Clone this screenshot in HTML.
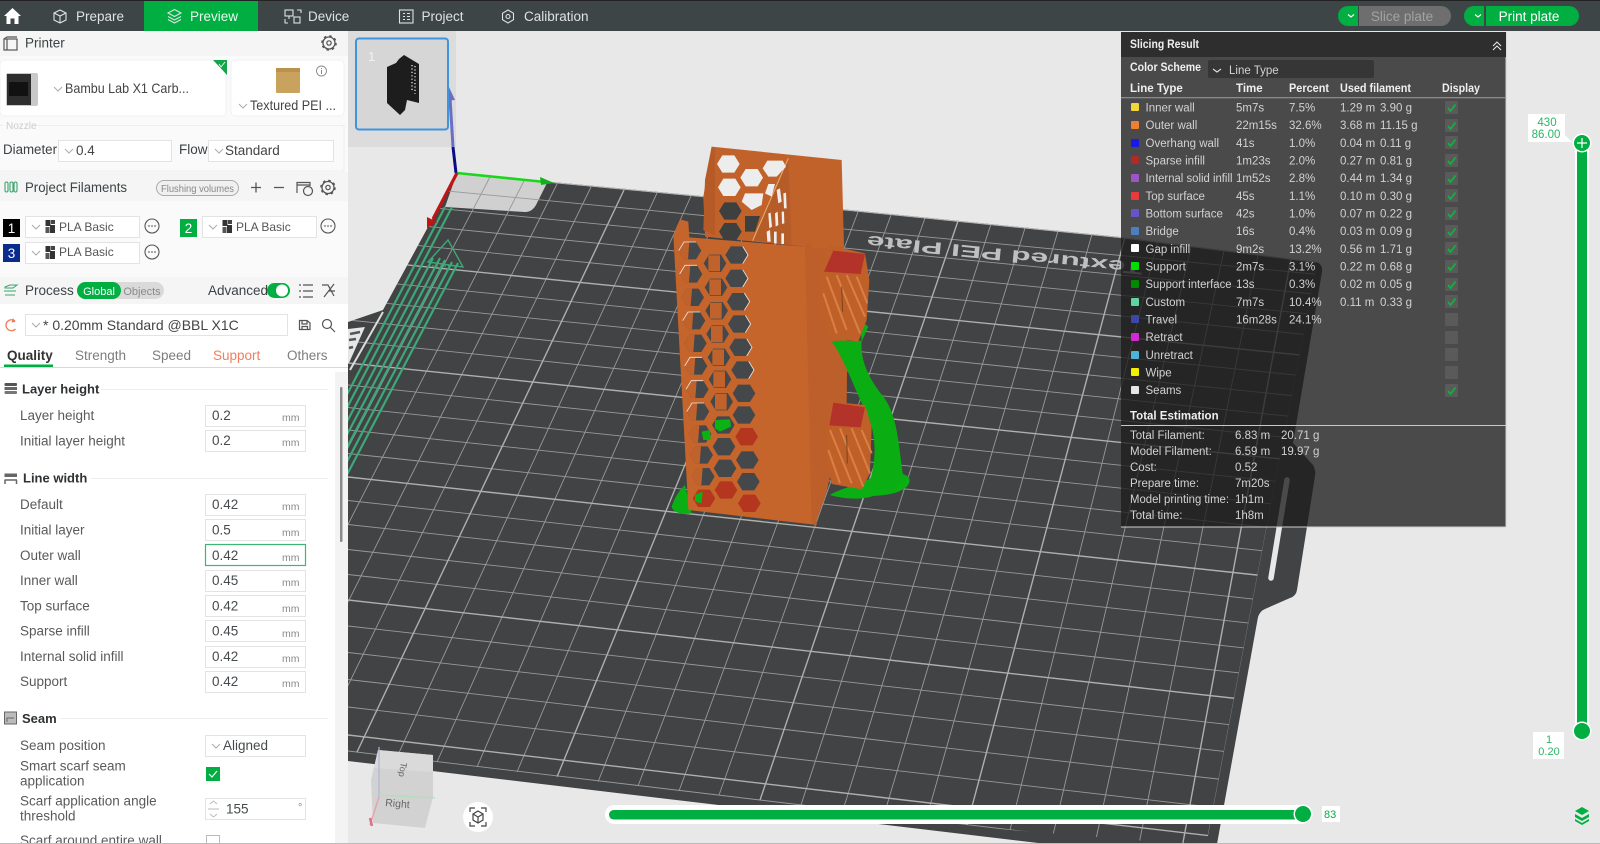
<!DOCTYPE html>
<html><head><meta charset="utf-8"><title>Bambu Studio Preview</title>
<style>
html,body{margin:0;padding:0;background:#e8e8e8;width:1600px;height:844px;overflow:hidden}
svg{display:block;font-family:"Liberation Sans",sans-serif}
.tb{font-size:13.5px;fill:#dfe2e2}
.l{font-size:13.5px;fill:#5a5a5a}
.d{font-size:13.5px;fill:#3c4245}
.v{font-size:13.5px;fill:#454a4c}
.u{font-size:10.5px;fill:#8a8a8a}
.b{font-size:13px;font-weight:bold;fill:#2e3234}
.p{font-size:11.5px;fill:#d2d2d2}
.ph{font-size:11.5px;font-weight:bold;fill:#efefef}
.ic{fill:none;stroke:#555;stroke-width:1.2}
.it{fill:none;stroke:#dfe2e2;stroke-width:1.1}
</style></head><body>
<svg width="1600" height="844" viewBox="0 0 1600 844" xmlns="http://www.w3.org/2000/svg">
<defs>
<clipPath id="pl"><path d="M457 173L552 182L850 210L1120 237L1316 262Q1323 264 1322 272L1293 443L1313 465Q1316 470 1315 476L1297 590Q1296 596 1290 598L1265 609Q1260 611 1258 617L1217 844H1047L348 761V322L383 310L428 227Z"/></clipPath>
<clipPath id="gr"><path d="M340 160L457 172L552 181L850 209L1120 236L1317 262L1206 846L962 826L762 801L357 753L340 751Z"/></clipPath>
<path id="h" d="M-34 0L-18 -26L18 -26L34 0L18 26L-18 26Z"/>
<path id="hl" d="M-34 0L-18 -26L-2 -26L-6 26L-18 26Z"/>
<path id="hc" d="M-20 -24H15V24H-20Z"/>
<path id="ew" d="M-34 0L-18 -26H18" fill="none" stroke="#e8e8e8" stroke-width="2.5"/>
<path id="er" d="M18 -26L34 0L18 26" fill="none" stroke="#e8e8e8" stroke-width="2.5"/>
<path id="cv" d="M-4 -2L0 2L4 -2" fill="none" stroke="#aaa" stroke-width="1"/>
<g id="gear"><circle r="6" fill="none" stroke="#555" stroke-width="1.3"/><circle r="7" fill="none" stroke="#555" stroke-width="1.6" stroke-dasharray="2.5 3"/><circle r="2.2" fill="none" stroke="#555" stroke-width="1.2"/></g>
<g id="mn"><circle r="7" fill="none" stroke="#555" stroke-width="1.1"/><path d="M-4 0h2M-1 0h2M2 0h2" stroke="#555" stroke-width="1.1"/></g>
<g id="fi"><rect x="0" y="0" width="5" height="6" fill="#333"/><rect x="5.5" y="0" width="4" height="4" fill="#444"/><rect x="0" y="7" width="4" height="6" fill="#555"/><rect x="4.5" y="5" width="5" height="8" fill="#333"/></g>
<g id="cb"><rect width="13" height="13" rx="1" fill="#5a5a5a"/></g>
<path id="ck" d="M3 7L5.5 10L10.5 3.5" fill="none" stroke="#12b03f" stroke-width="1.8"/>
</defs>

<!-- viewport -->
<rect width="1600" height="844" fill="#e8e8e8"/>
<rect x="348" y="31" width="108" height="116" fill="#dcdcdc"/>

<!-- plate -->
<path d="M457 173L552 182L850 210L1120 237L1316 262Q1323 264 1322 272L1293 443L1313 465Q1316 470 1315 476L1297 590Q1296 596 1290 598L1265 609Q1260 611 1258 617L1217 844H1047L348 761V322L383 310L428 227Z" fill="#414344"/>
<path d="M457 173L547 183L537 203Q533 212 525 212L445 207Z" fill="#d0d0d0"/>
<g clip-path="url(#pl)">
<g clip-path="url(#gr)">
<g fill="none" stroke="#98999a" stroke-width=".9">
<path d="M348 181.500L1340 276.500M348 199.500L1340 296.500M348 218.500L1340 317M348 238.500L1340 338M348 279L1340 379.500M348 299.500L1340 400.500M348 320L1340 421.500M348 341L1340 443M348 385L1340 488M348 407.500L1340 511M348 430L1340 535M348 453.500L1340 559M348 500.500L1340 608.500M348 524.500L1340 633M348 549.500L1340 658.500M348 574.500L1340 684M348 626L1340 737M348 652.500L1340 764.500M348 679.500L1340 793M348 707L1340 822M348 751L1340 869"/>
<path d="M490 177L199 732M524 181L239 737M557 184L278 742M591 187L318 747M657 193L397 757M691 196L437 762M724 199L477 767M758 202L517 772M824 209L598 782M858 212L638 786M891 215L679 791M925 218L719 795M991 224L801 805M1025 228L843 810M1058 231L884 815M1092 234L926 820M1158 240L1010 830M1192 243L1053 835M1225 246L1096 839M1259 250L1139 844"/>
<path d="M1317 264L1208 836"/>
</g>
<g fill="none" stroke="#aeafaf" stroke-width="1.4">
<path d="M348 259L1340 359M348 363L1340 465M348 477L1340 584M348 600L1340 710M348 735L1340 851"/>
<path d="M624 190L357 752M791 206L557 777M958 221L760 800M1125 237L967 825M1292 253L1182 848"/>
</g>
</g>
<path d="M552 182L850 210L1120 237L1316 262" fill="none" stroke="#b8b8b8" stroke-width="2"/>
<path d="M383 312L350 370" stroke="#dcdcdc" stroke-width="2"/>
<path d="M348 329L365 327L349 363H348Z" fill="#e6e6e6"/>
<path d="M350 334L360 332M349 340L356 339M349 348L353 347" stroke="#555" stroke-width="2.5"/>
<!-- purge lines -->
<g fill="none" stroke="#3da878" stroke-width="2.2">
<path d="M445 207L340 408M452 207L340 421"/>
<path d="M433 258L340 435M440 258L340 448M445 260L340 461M452 262L340 475M458 263L340 488"/>
<path d="M448 240L463 267L428 262Z" stroke-width="1.4"/>
<path d="M428 266H460" stroke-width="1" stroke-dasharray="2 2"/>
</g>
<text transform="translate(1143 263) rotate(185.7)" font-size="17" font-weight="bold" fill="#bfc0c0" textLength="277" lengthAdjust="spacingAndGlyphs">Textured PEI Plate</text>
</g>
<path d="M1287 480L1271 578" stroke="#e8e8e8" stroke-width="5.5" stroke-linecap="round"/>

<!-- axes -->
<path d="M456 173L453 147" stroke="#0b0b86" stroke-width="3"/>
<path d="M453 147L450 98" stroke="#6a6fc4" stroke-width="3"/>
<path d="M449 87L444 101L455 100Z" fill="#6a6fc4"/>
<path d="M457 173L545 182" stroke="#1bd71b" stroke-width="2.6"/>
<path d="M554 183L540 177L541 185Z" fill="#12b01b"/>
<path d="M457 173L433 219" stroke="#bf1515" stroke-width="3.2"/>
<path d="M427 228L427 217L437 222Z" fill="#c01515"/>

<!-- thumbnail -->
<rect x="356" y="38.500" width="92" height="91" rx="3" fill="#d6d6d6" stroke="#3d95e0" stroke-width="2"/>
<text x="368" y="61" font-size="13" fill="#f2f2f2">1</text>
<path d="M387 67L396 63L399 59L404 55L419 64L419 103L407 100L405 110L400 115L387 103Z" fill="#1d1d1d"/>
<path d="M412 65V92M415 66V94" stroke="#e8e8e8" stroke-width="1.3" stroke-dasharray="1.2 2.2"/>

<!-- model -->
<g transform="translate(620 130) scale(.33333)">
<!-- green base -->
<path d="M630 1095C660 1075 720 1065 760 1040C800 1030 850 1020 868 1045C875 1075 830 1095 760 1098C720 1112 660 1105 630 1095Z" fill="#0aaf14"/>
<path d="M155 1130C165 1100 175 1085 195 1065L215 1150C190 1155 160 1150 155 1130Z" fill="#0aaf14"/>
<!-- back wall -->
<path d="M275 50L665 90L672 350L600 390L555 350L255 320L250 200Z" fill="#c2622b"/>
<path d="M275 50L255 150L250 300L285 318L285 58Z" fill="#b65a27"/>
<path d="M505 85L400 330L515 345Z" fill="#b65c29"/>
<path d="M505 85L398 332" stroke="#e8b070" stroke-width="3"/>
<g fill="#ededed">
<use href="#h" x="325" y="102"/><use href="#h" x="395" y="143"/><use href="#h" x="328" y="172"/>
<path d="M428 115L442 92H488L498 110L470 140L445 140Z"/>
<path d="M365 215L375 190H430L425 225L395 240Z"/>
<path d="M435 190L445 162H465L455 200Z"/>
</g>
<g fill="#3e4040"><use href="#h" x="331" y="243"/><use href="#h" x="331" y="305"/><path d="M375 258H420L405 305H375Z"/></g>
<g fill="#eee"><path d="M470 180L480 175L485 215L475 220ZM490 190L498 188L500 235L492 235ZM445 250L452 248L456 290L448 295ZM465 250L473 245L475 285L467 290ZM485 245L492 245L493 280L486 282ZM440 305L450 300L452 335L442 335ZM462 305L470 305L470 340L462 340ZM484 310L492 310L492 342L484 342Z"/></g>
<!-- side face -->
<path d="M555 340L582 355L670 350L682 640L680 820L620 1085L585 1185Z" fill="#bd5f2a"/>
<!-- support -->
<path d="M635 635C665 628 700 636 725 632C720 690 745 745 790 800C835 860 835 950 850 1040C830 1085 760 1090 748 1060C770 990 770 910 740 850C700 770 670 680 635 635Z" fill="#0aae12"/>
<path d="M720 570L745 590L725 635Z" fill="#0aaf14"/>
<!-- front face -->
<path d="M160 315L180 268L205 275L208 322L555 350L590 1185L205 1140Z" fill="#c5652c"/>
<path d="M555 350L565 335L580 355L590 1185L575 1180Z" fill="#bd5f2a"/>
<!-- hexes -->
<g fill="#45484a">
<use href="#h" x="210" y="362"/><use href="#h" x="213" y="432"/><use href="#h" x="218" y="502"/><use href="#h" x="222" y="572"/><use href="#h" x="226" y="640"/><use href="#h" x="228" y="708"/><use href="#h" x="232" y="778"/><use href="#h" x="234" y="845"/>
<use href="#h" x="240" y="912"/><use href="#h" x="245" y="975"/><use href="#h" x="250" y="1040"/>
<use href="#h" x="285" y="400"/><use href="#h" x="288" y="472"/><use href="#h" x="290" y="542"/><use href="#h" x="293" y="612"/><use href="#h" x="297" y="682"/><use href="#h" x="300" y="748"/><use href="#h" x="305" y="815"/><use href="#h" x="310" y="885"/><use href="#h" x="312" y="950"/><use href="#h" x="315" y="1015"/>
<use href="#h" x="350" y="375"/><use href="#h" x="350" y="445"/><use href="#h" x="355" y="515"/><use href="#h" x="358" y="582"/><use href="#h" x="362" y="652"/><use href="#h" x="368" y="720"/><use href="#h" x="372" y="790"/><use href="#h" x="372" y="855"/><use href="#h" x="382" y="990"/><use href="#h" x="385" y="1055"/>
</g>
<g fill="#b5361f"><use href="#h" x="380" y="920"/><use href="#h" x="318" y="1080"/><use href="#h" x="388" y="1120"/><use href="#h" x="252" y="1105"/></g>
<g fill="#bf622b">
<use href="#hl" x="210" y="362"/><use href="#hl" x="213" y="432"/><use href="#hl" x="218" y="502"/><use href="#hl" x="222" y="572"/><use href="#hl" x="226" y="640"/><use href="#hl" x="228" y="708"/><use href="#hl" x="232" y="778"/><use href="#hl" x="234" y="845"/><use href="#hl" x="240" y="912"/><use href="#hl" x="245" y="975"/><use href="#hl" x="250" y="1040"/>
<use href="#hc" x="285" y="400"/><use href="#hc" x="288" y="472"/><use href="#hc" x="290" y="542"/><use href="#hc" x="293" y="612"/><use href="#hc" x="297" y="682"/><use href="#hc" x="300" y="748"/><use href="#hc" x="305" y="815"/>
</g>
<use href="#ew" x="210" y="362"/><use href="#ew" x="213" y="432"/><use href="#ew" x="222" y="572"/><use href="#ew" x="228" y="708"/><use href="#ew" x="232" y="778"/><use href="#ew" x="234" y="845"/>
<use href="#er" x="350" y="375"/><use href="#er" x="350" y="445"/><use href="#er" x="355" y="515"/><use href="#er" x="358" y="582"/><use href="#er" x="362" y="652"/><use href="#er" x="368" y="720"/>
<path d="M285 870L330 868L333 890L300 905L285 895ZM245 905L270 900L272 930L250 930ZM225 1095L248 1085L245 1120L225 1115Z" fill="#0ab213"/>
<!-- upper bracket -->
<path d="M625 345L735 370L748 450L740 570L715 635L635 625L600 560L600 430Z" fill="#bf6029"/>
<path d="M640 362L735 372L722 432L612 425Z" fill="#b3332a"/>
<path d="M620 440L680 600M650 435L720 610M680 435L735 560M610 490L650 610M710 440L742 520" stroke="#d98045" stroke-width="6" fill="none"/>
<path d="M665 470L668 545" stroke="#7a4320" stroke-width="3"/>
<!-- lower bracket -->
<path d="M630 815L735 825L755 890L750 1030L725 1078L635 1062L620 1000L620 890Z" fill="#bf6029"/>
<path d="M640 818L735 832L722 892L628 886Z" fill="#b3332a"/>
<path d="M630 900L695 1060M660 895L730 1070M695 895L750 1030M625 960L660 1060M725 900L755 970" stroke="#d98045" stroke-width="6" fill="none"/>
<path d="M680 915L682 1000" stroke="#7a4320" stroke-width="3"/>
</g>

<!-- gizmo -->
<path d="M378 750L433 755V797L425 828L373 823L371 780Z" fill="#d2d2d2"/>
<path d="M378 750L433 755V772L374 768Z" fill="#dadada"/>
<path d="M379 747V797" stroke="#b0b4d6" stroke-width="1.200"/>
<path d="M379 795L435 798" stroke="#b0dfb8" stroke-width="1.200"/>
<path d="M379 797L370 825" stroke="#e3a4ae" stroke-width="1.400"/>
<path d="M370 818L372 826" stroke="#d8748a" stroke-width="2.500"/>
<text transform="translate(385 806) rotate(5)" font-size="10.500" fill="#666">Right</text>
<text transform="translate(401 762) rotate(100)" font-size="9" fill="#666">Top</text>
<circle cx="478" cy="817" r="15" fill="#fff"/>
<g transform="translate(478 817)" fill="none" stroke="#444" stroke-width="1.200">
<path d="M-8 -5V-9H-3M3 -9H8V-5M8 5V9H3M-3 9H-8V5"/>
<path d="M0 -6L5 -3V3L0 6L-5 3V-3Z"/><path d="M0 0L5 -3M0 0L-5 -3M0 0V6"/>
</g>

<!-- bottom slider -->
<rect x="605" y="805" width="706" height="19" rx="9.500" fill="#fff"/>
<rect x="609" y="810" width="695" height="9.500" rx="4.700" fill="#00ae42"/>
<circle cx="1303" cy="814" r="9.500" fill="#fff"/><circle cx="1303" cy="814" r="8" fill="#00ae42"/>
<rect x="1322" y="806" width="18" height="16" fill="#fff"/>
<text x="1324" y="818" font-size="11" fill="#00ae42">83</text>

<!-- right slider -->
<rect x="1575" y="146" width="14" height="586" fill="#fff" opacity=".9"/>
<rect x="1577" y="146" width="10" height="586" fill="#00ae42"/>
<circle cx="1582" cy="143" r="9.500" fill="#fff"/><circle cx="1582" cy="143" r="8" fill="#00ae42"/>
<path d="M1577 143H1587M1582 138V148" stroke="#fff" stroke-width="1.200"/>
<circle cx="1582" cy="731" r="9.500" fill="#fff"/><circle cx="1582" cy="731" r="8" fill="#00ae42"/>
<rect x="1528" y="114" width="37" height="28" fill="#fff"/><path d="M1565 135L1572 142H1565Z" fill="#fff"/>
<text x="1547" y="126" font-size="11.500" fill="#2db565" text-anchor="middle">430</text>
<text x="1546" y="138" font-size="11.500" fill="#2db565" text-anchor="middle">86.00</text>
<rect x="1533" y="732" width="31" height="27" fill="#fff"/>
<text x="1549" y="743" font-size="11" fill="#2db565" text-anchor="middle">1</text>
<text x="1549" y="755" font-size="11" fill="#2db565" text-anchor="middle">0.20</text>
<g transform="translate(1582 815)" fill="#00ae42"><path d="M0 -8L7 -4L0 0L-7 -4Z"/><path d="M-7 -1L0 3L7 -1V2L0 6L-7 2Z"/><path d="M-7 4L0 8L7 4V6L0 10L-7 6Z"/></g>

<!-- slicing panel -->
<rect x="1121" y="32" width="385" height="495" fill="#1d1d1d" fill-opacity=".78"/>
<path d="M1506 32V527H1121" fill="none" stroke="#d0d0d0" stroke-width="1"/>
<rect x="1121" y="32" width="385" height="25" fill="#2e2e2e"/>
<text x="1130" y="48" class="ph" textLength="69" lengthAdjust="spacingAndGlyphs">Slicing Result</text>
<path d="M1493 46L1497 42L1501 46M1493 50L1497 46L1501 50" fill="none" stroke="#e6e6e6" stroke-width="1.100"/>
<text x="1130" y="71" class="ph" textLength="71" lengthAdjust="spacingAndGlyphs">Color Scheme</text>
<rect x="1208" y="60" width="166" height="18" rx="2" fill="#333" fill-opacity=".85"/>
<path d="M1213 69L1217 72L1221 69" fill="none" stroke="#ddd" stroke-width="1.100"/>
<text x="1229" y="74" class="p">Line Type</text>
<g class="ph"><text x="1130" y="92">Line Type</text><text x="1236" y="92">Time</text><text x="1289" y="92" textLength="40" lengthAdjust="spacingAndGlyphs">Percent</text><text x="1340" y="92" textLength="71" lengthAdjust="spacingAndGlyphs">Used filament</text><text x="1442" y="92" textLength="38" lengthAdjust="spacingAndGlyphs">Display</text></g>
<rect x="1121" y="97" width="385" height="1.300" fill="#8a8a8a"/>
<g>
<rect x="1131" y="103" width="8" height="8" rx="1" fill="#f2d73b"/>
<rect x="1131" y="121" width="8" height="8" rx="1" fill="#ef8032"/>
<rect x="1131" y="139" width="8" height="8" rx="1" fill="#1a1ae6"/>
<rect x="1131" y="156" width="8" height="8" rx="1" fill="#b02a2a"/>
<rect x="1131" y="174" width="8" height="8" rx="1" fill="#9c55c8"/>
<rect x="1131" y="192" width="8" height="8" rx="1" fill="#e83a3a"/>
<rect x="1131" y="209" width="8" height="8" rx="1" fill="#6a52c8"/>
<rect x="1131" y="227" width="8" height="8" rx="1" fill="#4a80c0"/>
<rect x="1131" y="244" width="8" height="8" rx="1" fill="#fff"/>
<rect x="1131" y="262" width="8" height="8" rx="1" fill="#00e000"/>
<rect x="1131" y="280" width="8" height="8" rx="1" fill="#008a00"/>
<rect x="1131" y="298" width="8" height="8" rx="1" fill="#5fd3a3"/>
<rect x="1131" y="315" width="8" height="8" rx="1" fill="#3c48a8"/>
<rect x="1131" y="333" width="8" height="8" rx="1" fill="#d428d4"/>
<rect x="1131" y="351" width="8" height="8" rx="1" fill="#4fb3d8"/>
<rect x="1131" y="368" width="8" height="8" rx="1" fill="#f5f000"/>
<rect x="1131" y="386" width="8" height="8" rx="1" fill="#e6e6e6"/>
</g>
<g class="p">
<text x="1145.500" y="111.500">Inner wall</text><text x="1236" y="111.500">5m7s</text><text x="1289" y="111.500">7.5%</text><text x="1340" y="111.500">1.29 m</text><text x="1380" y="111.500">3.90 g</text>
<text x="1145.500" y="129">Outer wall</text><text x="1236" y="129">22m15s</text><text x="1289" y="129">32.6%</text><text x="1340" y="129">3.68 m</text><text x="1380" y="129">11.15 g</text>
<text x="1145.500" y="147">Overhang wall</text><text x="1236" y="147">41s</text><text x="1289" y="147">1.0%</text><text x="1340" y="147">0.04 m</text><text x="1380" y="147">0.11 g</text>
<text x="1145.500" y="164.500">Sparse infill</text><text x="1236" y="164.500">1m23s</text><text x="1289" y="164.500">2.0%</text><text x="1340" y="164.500">0.27 m</text><text x="1380" y="164.500">0.81 g</text>
<text x="1145.500" y="182" textLength="87" lengthAdjust="spacingAndGlyphs">Internal solid infill</text><text x="1236" y="182">1m52s</text><text x="1289" y="182">2.8%</text><text x="1340" y="182">0.44 m</text><text x="1380" y="182">1.34 g</text>
<text x="1145.500" y="200">Top surface</text><text x="1236" y="200">45s</text><text x="1289" y="200">1.1%</text><text x="1340" y="200">0.10 m</text><text x="1380" y="200">0.30 g</text>
<text x="1145.500" y="217.500">Bottom surface</text><text x="1236" y="217.500">42s</text><text x="1289" y="217.500">1.0%</text><text x="1340" y="217.500">0.07 m</text><text x="1380" y="217.500">0.22 g</text>
<text x="1145.500" y="235">Bridge</text><text x="1236" y="235">16s</text><text x="1289" y="235">0.4%</text><text x="1340" y="235">0.03 m</text><text x="1380" y="235">0.09 g</text>
<text x="1145.500" y="253">Gap infill</text><text x="1236" y="253">9m2s</text><text x="1289" y="253">13.2%</text><text x="1340" y="253">0.56 m</text><text x="1380" y="253">1.71 g</text>
<text x="1145.500" y="270.500">Support</text><text x="1236" y="270.500">2m7s</text><text x="1289" y="270.500">3.1%</text><text x="1340" y="270.500">0.22 m</text><text x="1380" y="270.500">0.68 g</text>
<text x="1145.500" y="288" textLength="86" lengthAdjust="spacingAndGlyphs">Support interface</text><text x="1236" y="288">13s</text><text x="1289" y="288">0.3%</text><text x="1340" y="288">0.02 m</text><text x="1380" y="288">0.05 g</text>
<text x="1145.500" y="306">Custom</text><text x="1236" y="306">7m7s</text><text x="1289" y="306">10.4%</text><text x="1340" y="306">0.11 m</text><text x="1380" y="306">0.33 g</text>
<text x="1145.500" y="323.500">Travel</text><text x="1236" y="323.500">16m28s</text><text x="1289" y="323.500">24.1%</text>
<text x="1145.500" y="341">Retract</text>
<text x="1145.500" y="359">Unretract</text>
<text x="1145.500" y="376.500">Wipe</text>
<text x="1145.500" y="394">Seams</text>
</g>
<g>
<use href="#cb" x="1445" y="101"/><use href="#ck" x="1445" y="101"/>
<use href="#cb" x="1445" y="119"/><use href="#ck" x="1445" y="119"/>
<use href="#cb" x="1445" y="136"/><use href="#ck" x="1445" y="136"/>
<use href="#cb" x="1445" y="154"/><use href="#ck" x="1445" y="154"/>
<use href="#cb" x="1445" y="172"/><use href="#ck" x="1445" y="172"/>
<use href="#cb" x="1445" y="189"/><use href="#ck" x="1445" y="189"/>
<use href="#cb" x="1445" y="207"/><use href="#ck" x="1445" y="207"/>
<use href="#cb" x="1445" y="225"/><use href="#ck" x="1445" y="225"/>
<use href="#cb" x="1445" y="242"/><use href="#ck" x="1445" y="242"/>
<use href="#cb" x="1445" y="260"/><use href="#ck" x="1445" y="260"/>
<use href="#cb" x="1445" y="278"/><use href="#ck" x="1445" y="278"/>
<use href="#cb" x="1445" y="295"/><use href="#ck" x="1445" y="295"/>
<use href="#cb" x="1445" y="313"/>
<use href="#cb" x="1445" y="331"/>
<use href="#cb" x="1445" y="348"/>
<use href="#cb" x="1445" y="366"/>
<use href="#cb" x="1445" y="384"/><use href="#ck" x="1445" y="384"/>
</g>
<text x="1130" y="419.500" class="ph">Total Estimation</text>
<rect x="1121" y="425" width="385" height="1" fill="#c8c8c8"/>
<g class="p">
<text x="1130" y="439">Total Filament:</text><text x="1235" y="439">6.83 m</text><text x="1281" y="439">20.71 g</text>
<text x="1130" y="455">Model Filament:</text><text x="1235" y="455">6.59 m</text><text x="1281" y="455">19.97 g</text>
<text x="1130" y="471">Cost:</text><text x="1235" y="471">0.52</text>
<text x="1130" y="487">Prepare time:</text><text x="1235" y="487">7m20s</text>
<text x="1130" y="503" textLength="99" lengthAdjust="spacingAndGlyphs">Model printing time:</text><text x="1235" y="503">1h1m</text>
<text x="1130" y="519">Total time:</text><text x="1235" y="519">1h8m</text>
</g>

<!-- left panel -->
<rect x="0" y="31" width="348" height="813" fill="#fafafa"/>
<rect x="0" y="31" width="348" height="25" fill="#f5f5f5"/>
<rect x="0" y="172" width="348" height="29" fill="#f5f5f5"/>
<rect x="0" y="277" width="348" height="27" fill="#f5f5f5"/>
<rect x="0" y="304" width="348" height="540" fill="#fff"/>
<rect x="335" y="372" width="13" height="472" fill="#f3f3f3"/>

<!-- printer -->
<g transform="translate(3 37)" class="ic"><rect x="1" y="2" width="13" height="11"/><path d="M4 2V13M1 2L4 0H14"/></g>
<text x="25" y="47.500" class="d">Printer</text>
<use href="#gear" x="329" y="43"/>
<rect x="0" y="60" width="226" height="56" rx="4" fill="#fff" stroke="#f0f0f0"/>
<rect x="231" y="60" width="113" height="56" rx="4" fill="#fff" stroke="#f0f0f0"/>
<path d="M213 60H227V75Z" fill="#12a64a"/>
<path d="M219 64L221 67L225 62" fill="none" stroke="#fff" stroke-width=".8"/>
<rect x="6" y="73" width="32" height="33" rx="2" fill="#c9c9c9"/>
<rect x="7" y="74" width="24" height="31" fill="#2e2e2e"/>
<rect x="9" y="82" width="19" height="14" fill="#111"/>
<use href="#cv" x="58" y="89" />
<text x="65" y="93" font-size="14" fill="#444" textLength="124" lengthAdjust="spacingAndGlyphs">Bambu Lab X1 Carb...</text>
<rect x="276" y="68" width="24" height="25" rx="1" fill="#c9a25e"/>
<rect x="276" y="68" width="24" height="4" fill="#b9924f"/>
<circle cx="321.500" cy="71" r="5" fill="none" stroke="#888" stroke-width=".9"/><path d="M321.500 70V74M321.500 68V69" stroke="#888" stroke-width="1"/>
<use href="#cv" x="243" y="106"/>
<text x="250" y="110" font-size="14" fill="#444" textLength="86" lengthAdjust="spacingAndGlyphs">Textured PEI ...</text>

<path d="M3 125.500H0M36 125.500H344V171H0" fill="none" stroke="#eee"/>
<text x="6" y="129" font-size="10" fill="#ccc">Nozzle</text>
<text x="3" y="154" class="d" textLength="54" lengthAdjust="spacingAndGlyphs">Diameter</text>
<rect x="58.500" y="140.500" width="113" height="21" fill="#fff" stroke="#e3e3e3"/>
<use href="#cv" x="69" y="151"/><text x="76" y="155" font-size="13.500" fill="#444">0.4</text>
<text x="179" y="154" class="d">Flow</text>
<rect x="208.500" y="140.500" width="125" height="21" fill="#fff" stroke="#e3e3e3"/>
<use href="#cv" x="219" y="151"/><text x="225" y="155" font-size="13.500" fill="#444">Standard</text>

<!-- filaments -->
<g fill="none" stroke="#3aa56f" stroke-width="1.100"><rect x="5" y="182" width="3" height="10" rx="1.500"/><rect x="10" y="182" width="3" height="10" rx="1.500"/><rect x="14" y="182" width="3" height="10" rx="1.500"/></g>
<text x="25" y="192" class="d" textLength="102" lengthAdjust="spacingAndGlyphs">Project Filaments</text>
<rect x="156.500" y="180.500" width="82" height="15" rx="7.500" fill="#f0f0f0" stroke="#aaa"/>
<text x="161" y="192" font-size="10.500" fill="#888" textLength="73" lengthAdjust="spacingAndGlyphs">Flushing volumes</text>
<path d="M251 187.500H261M256 182.500V192.500M274 187.500H284" stroke="#555" stroke-width="1.300"/>
<g class="ic"><path d="M297 193V182.500H310V186M297 185H310"/><circle cx="308" cy="191" r="4.500"/></g>
<use href="#gear" x="328" y="187.500"/>

<rect x="3" y="219" width="17" height="18" fill="#000"/><text x="11.500" y="233" font-size="13.500" fill="#fff" text-anchor="middle">1</text>
<rect x="25.500" y="216.500" width="114" height="21" fill="#fff" stroke="#e3e3e3"/>
<use href="#cv" x="36" y="227"/><use href="#fi" x="45.500" y="220"/>
<text x="59" y="231" font-size="12" fill="#555">PLA Basic</text>
<use href="#mn" x="152" y="226"/>
<rect x="180" y="219" width="17" height="18" fill="#00ae42"/><text x="188.500" y="233" font-size="13.500" fill="#fff" text-anchor="middle">2</text>
<rect x="202.500" y="216.500" width="114" height="21" fill="#fff" stroke="#e3e3e3"/>
<use href="#cv" x="213" y="227"/><use href="#fi" x="222.500" y="220"/>
<text x="236" y="231" font-size="12" fill="#555">PLA Basic</text>
<use href="#mn" x="328" y="226"/>
<rect x="3" y="244" width="17" height="18" fill="#0a2a8c"/><text x="11.500" y="258" font-size="13.500" fill="#fff" text-anchor="middle">3</text>
<rect x="25.500" y="242.500" width="114" height="21" fill="#fff" stroke="#e3e3e3"/>
<use href="#cv" x="36" y="253"/><use href="#fi" x="45.500" y="246"/>
<text x="59" y="256" font-size="12" fill="#555">PLA Basic</text>
<use href="#mn" x="152" y="252"/>

<!-- process -->
<g fill="none" stroke="#3aa56f" stroke-width="1"><path d="M5 287L10 285H17L13 288H5ZM4 291H16M5 295H15"/></g>
<text x="25" y="295" class="d">Process</text>
<rect x="77" y="282" width="87" height="17" rx="8.500" fill="#dadada"/>
<rect x="77" y="282" width="44" height="17" rx="8.500" fill="#00ae42"/>
<text x="99" y="295" font-size="11" fill="#fff" text-anchor="middle">Global</text>
<text x="142" y="295" font-size="11" fill="#8a8a8a" text-anchor="middle">Objects</text>
<text x="208" y="295" class="d">Advanced</text>
<rect x="267" y="283" width="23" height="15" rx="7.500" fill="#00ae42"/><circle cx="282" cy="290.500" r="6" fill="#fff"/>
<path d="M299 285H301M303 285H313M299 291H301M303 291H313M299 297H301M303 297H313" stroke="#555" stroke-width="1.300"/>
<path d="M322 285H328L334 296M324 297L334 284M329 291H335" class="ic"/>

<path d="M15 321A5.500 5.500 0 1 0 15.500 329" fill="none" stroke="#ef7b5a" stroke-width="1.300"/><path d="M13 318L15.500 322L11.500 322.500Z" fill="#ef7b5a"/>
<rect x="25.500" y="314.500" width="262" height="21" fill="#fff" stroke="#e3e3e3"/>
<use href="#cv" x="36" y="325"/>
<text x="43" y="330" font-size="14" fill="#444">* 0.20mm Standard @BBL X1C</text>
<path d="M299.500 320.500H307L310 323V329.500H299.500ZM302 320.500V324H307V320.500M302 329.500V326.500H307.500V329.500" class="ic"/>
<circle cx="327" cy="324" r="4.500" class="ic"/><path d="M330.500 327.500L335 332" class="ic"/>

<text x="7" y="360" font-size="13.500" font-weight="bold" fill="#333">Quality</text>
<text x="75" y="360" font-size="13.500" fill="#7d7d7d">Strength</text>
<text x="152" y="360" font-size="13.500" fill="#7d7d7d">Speed</text>
<text x="213" y="360" font-size="13.500" fill="#ef7e5e">Support</text>
<text x="287" y="360" font-size="13.500" fill="#7d7d7d">Others</text>
<rect x="0" y="367" width="348" height="1" fill="#d8d8d8"/>
<rect x="4" y="364.500" width="49" height="2.500" fill="#00ae42"/>
<rect x="340" y="387" width="2.500" height="155" rx="1" fill="#8a8a8a"/>

<!-- layer height -->
<rect x="4.500" y="383" width="12.500" height="3" rx="1" fill="#555"/><rect x="4.500" y="387" width="12.500" height="3" fill="#666"/><rect x="4.500" y="391" width="12.500" height="3" rx="1" fill="#777"/>
<text x="22" y="393.500" class="b">Layer height</text>
<path d="M101 389.500H328" stroke="#eee"/>
<text x="20" y="420" class="l">Layer height</text>
<rect x="205.500" y="405.500" width="100" height="21" fill="#fff" stroke="#e3e3e3"/><text x="212" y="420" class="v">0.2</text><text x="282" y="421" class="u">mm</text>
<text x="20" y="445.500" class="l">Initial layer height</text>
<rect x="205.500" y="430.500" width="100" height="21" fill="#fff" stroke="#e3e3e3"/><text x="212" y="445" class="v">0.2</text><text x="282" y="446" class="u">mm</text>

<!-- line width -->
<rect x="4.500" y="473.500" width="12.500" height="3.500" fill="#666"/>
<path d="M4.500 480H17M5 480V484M16.500 480V484" fill="none" stroke="#666" stroke-width="1.500"/>
<text x="23" y="482.500" class="b">Line width</text>
<path d="M91 478.500H328" stroke="#eee"/>
<text x="20" y="509" class="l">Default</text>
<rect x="205.500" y="494.500" width="100" height="21" fill="#fff" stroke="#e3e3e3"/><text x="212" y="509" class="v">0.42</text><text x="282" y="510" class="u">mm</text>
<text x="20" y="534.500" class="l">Initial layer</text>
<rect x="205.500" y="519.500" width="100" height="21" fill="#fff" stroke="#e3e3e3"/><text x="212" y="534.500" class="v">0.5</text><text x="282" y="536" class="u">mm</text>
<text x="20" y="560" class="l">Outer wall</text>
<rect x="205.500" y="544.500" width="100" height="21" fill="#fff" stroke="#3eb574" stroke-width="1.200"/><text x="212" y="560" class="v">0.42</text><text x="282" y="561" class="u">mm</text>
<text x="20" y="585" class="l">Inner wall</text>
<rect x="205.500" y="570.500" width="100" height="21" fill="#fff" stroke="#e3e3e3"/><text x="212" y="585" class="v">0.45</text><text x="282" y="586" class="u">mm</text>
<text x="20" y="610.500" class="l">Top surface</text>
<rect x="205.500" y="595.500" width="100" height="21" fill="#fff" stroke="#e3e3e3"/><text x="212" y="610.500" class="v">0.42</text><text x="282" y="612" class="u">mm</text>
<text x="20" y="635.500" class="l">Sparse infill</text>
<rect x="205.500" y="620.500" width="100" height="21" fill="#fff" stroke="#e3e3e3"/><text x="212" y="635.500" class="v">0.45</text><text x="282" y="637" class="u">mm</text>
<text x="20" y="661" class="l">Internal solid infill</text>
<rect x="205.500" y="646.500" width="100" height="21" fill="#fff" stroke="#e3e3e3"/><text x="212" y="661" class="v">0.42</text><text x="282" y="662" class="u">mm</text>
<text x="20" y="686" class="l">Support</text>
<rect x="205.500" y="671.500" width="100" height="21" fill="#fff" stroke="#e3e3e3"/><text x="212" y="686" class="v">0.42</text><text x="282" y="687" class="u">mm</text>

<!-- seam -->
<rect x="4.500" y="712" width="12" height="12" fill="#bbb" stroke="#666"/><path d="M7 722V718H14" fill="none" stroke="#666"/>
<text x="22" y="723" class="b">Seam</text>
<path d="M60 718.500H328" stroke="#eee"/>
<text x="20" y="750" class="l">Seam position</text>
<rect x="205.500" y="735.500" width="100" height="21" fill="#fff" stroke="#e3e3e3"/><use href="#cv" x="216" y="746"/><text x="223" y="750" class="v">Aligned</text>
<text x="20" y="770.500" class="l">Smart scarf seam</text>
<text x="20" y="785.500" class="l">application</text>
<rect x="206" y="767" width="14" height="14" fill="#00ae42"/><path d="M209 774L212 777L217 771" fill="none" stroke="#fff" stroke-width="1.200"/>
<text x="20" y="805.500" class="l">Scarf application angle</text>
<text x="20" y="820.500" class="l">threshold</text>
<rect x="205.500" y="798.500" width="100" height="21" fill="#fff" stroke="#e3e3e3"/>
<path d="M210 804L213.500 801L217 804M210 814L213.500 817L217 814M208 809H219" fill="none" stroke="#bbb"/>
<text x="226" y="813.500" class="v">155</text><text x="298" y="811" font-size="11" fill="#888">°</text>
<text x="20" y="845" class="l">Scarf around entire wall</text>
<rect x="206.500" y="835.500" width="13" height="13" fill="#fff" stroke="#bbb"/>
<rect x="0" y="843" width="1600" height="1" fill="#bdbdb8"/>

<!-- top bar -->
<rect width="1600" height="31" fill="#3e4547"/>
<rect width="1600" height="1" fill="#222"/>
<rect x="144" y="1" width="114" height="30" fill="#00ae42"/>
<path d="M12.500 8L4 16H6.500V24H10.500V18.500H14.500V24H18.500V16H21Z" fill="#fff"/>
<g transform="translate(60 16.500)" class="it"><path d="M0 -6.500L6 -3.500V3.500L0 6.500L-6 3.500V-3.500Z"/><path d="M-6 -3.500L0 -.5L6 -3.500M0 -.5V6.500"/></g>
<text x="76" y="21" class="tb">Prepare</text>
<g transform="translate(174.500 16.500)" class="it"><path d="M0 -7L6.500 -3.500L0 0L-6.500 -3.500Z"/><path d="M-6.500 0L0 3.500L6.500 0M-6.500 3L0 6.500L6.500 3"/></g>
<text x="190" y="21" font-size="13.500" fill="#fff" fill-opacity=".92">Preview</text>
<g class="it"><rect x="285" y="10" width="8" height="6"/><path d="M289 16V19M285 19V23H288M297 10H301V13"/><rect x="294" y="17" width="6" height="6"/></g>
<text x="308" y="21" class="tb">Device</text>
<g class="it"><rect x="399.500" y="10" width="13.500" height="13"/><path d="M403 13.500H405M407 13.500H410M403 16.500H405M407 16.500H410M403 19.500H405M407 19.500H410"/></g>
<text x="421.500" y="21" class="tb">Project</text>
<g transform="translate(508 16.500)" class="it"><path d="M0 -6.500L5.500 -3.200V3.200L0 6.500L-5.500 3.200V-3.200Z"/><circle r="2"/></g>
<text x="524" y="21" class="tb">Calibration</text>

<path d="M1358 6H1348A10 10 0 0 0 1348 26H1358Z" fill="#00ae42"/>
<path d="M1348 14.500L1351 17L1354 14.500" fill="none" stroke="#fff" stroke-width="1.200"/>
<path d="M1359 6H1441A10 10 0 0 1 1441 26H1359Z" fill="#6e6e6e"/>
<text x="1402" y="21" font-size="13.500" fill="#a2a2a2" text-anchor="middle">Slice plate</text>
<path d="M1484 6H1474A10 10 0 0 0 1474 26H1484Z" fill="#00ae42"/>
<path d="M1475 14.500L1478 17L1481 14.500" fill="none" stroke="#fff" stroke-width="1.200"/>
<path d="M1486 6H1569A10 10 0 0 1 1569 26H1486Z" fill="#00ae42"/>
<text x="1529" y="21" font-size="13.500" fill="#fff" text-anchor="middle">Print plate</text>
</svg>
</body></html>
